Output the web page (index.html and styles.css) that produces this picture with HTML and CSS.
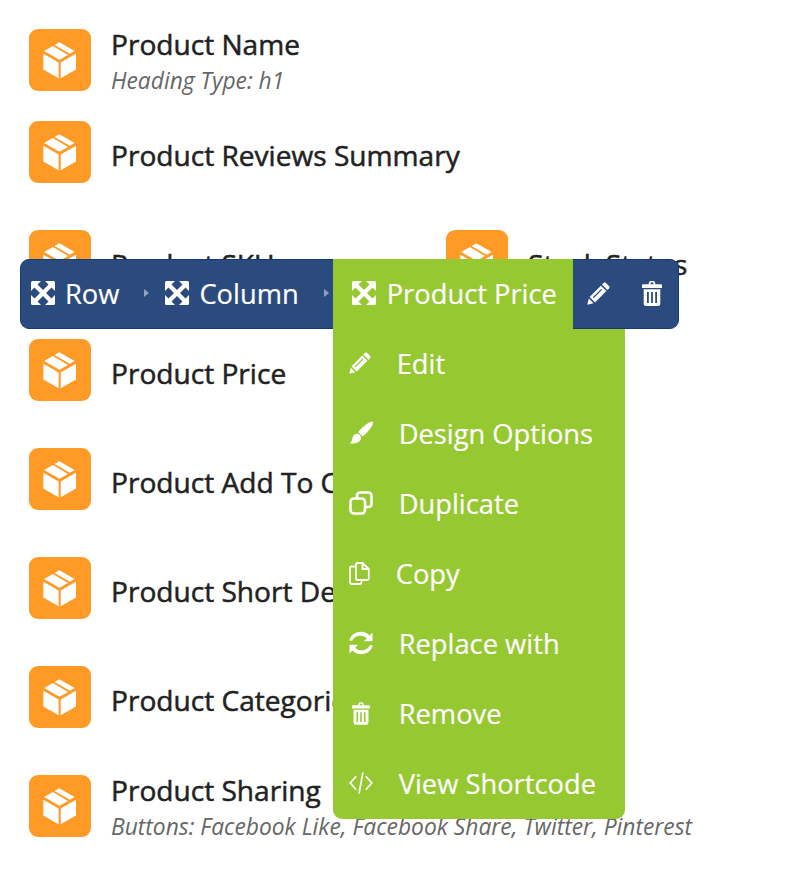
FILE: index.html
```html
<!DOCTYPE html>
<html lang="en">
<head>
<meta charset="utf-8">
<title>Product elements</title>
<link rel="stylesheet" href="styles.css">
</head>
<body>
<svg class="defs" width="0" height="0" aria-hidden="true">
  <defs>
    <symbol id="box" viewBox="0 0 62 62">
      <path d="M30.3 13.2 45.7 22 40.800 24.800 25.600 16Z"/>
      <path d="M23.800 17 39 25.900 30.500 30.800 15.200 22Z"/>
      <path d="M14.300 24.800 29.600 33.600V49.300L14.300 40.500Z"/>
      <path d="M47 24.800 31.700 33.600V49.300L47 40.500Z"/>
    </symbol>
    <symbol id="move" viewBox="0 0 24 24">
      <path d="M1.500 0H10L0 10V1.500Q0 0 1.500 0Z"/>
      <path d="M22.500 0H14L24 10V1.500Q24 0 22.500 0Z"/>
      <path d="M1.500 24H10L0 14V22.500Q0 24 1.500 24Z"/>
      <path d="M22.500 24H14L24 14V22.500Q24 24 22.500 24Z"/>
      <path d="M3 6 6 3 12 9 18 3 21 6 15 12 21 18 18 21 12 15 6 21 3 18 9 12Z"/>
    </symbol>
    <symbol id="pencil" viewBox="0 0 24 24">
      <path d="M17.400 .9Q18.500 0 19.600 .9L23.100 4.400Q24 5.500 23.100 6.600L21.300 8.400 15.600 2.700Z"/>
      <path fill-rule="evenodd" d="M14.500 3.800 20.200 9.500 8.400 21.300 2.700 15.600ZM14.800 7.200 6 16 6.900 16.900 15.700 8.100Z"/>
      <path d="M1.900 17.200 6.800 22.100 .3 23.700Z"/>
    </symbol>
    <symbol id="brush" viewBox="0 0 24 24">
      <path d="M23.600 .6C24.500 2 23.800 4 22 6.500 19.500 10 16 14 13.500 15.400L9.200 11.200C11 8.500 15 4.800 18.500 2.400 20.800 .8 22.800 0 23.600 .6Z"/>
      <path d="M7.800 12.800C10.200 12.800 12.400 15 11.900 17.500 11.300 21.300 6.800 23 .4 22.400 2.800 20.800 2.900 19.400 3.400 17 3.900 14.400 5.600 12.800 7.800 12.800Z"/>
    </symbol>
    <symbol id="duplicate" viewBox="0 0 24 24">
      <path fill="none" stroke="currentColor" stroke-width="2.600" d="M8 7.500V4.800Q8 1.500 11.300 1.500H19.200Q22.500 1.500 22.500 4.800V12.700Q22.500 16 19.200 16H16.500"/>
      <rect x="1.500" y="7.500" width="14.500" height="15" rx="3.500" fill="none" stroke="currentColor" stroke-width="2.600"/>
    </symbol>
    <symbol id="copy" viewBox="0 0 21 23">
      <path fill="none" stroke="currentColor" stroke-width="1.800" stroke-linejoin="round" d="M7 4.500H2.500Q1 4.500 1 6V20.500Q1 22 2.500 22H11Q12.500 22 12.500 20.500V18"/>
      <path fill="none" stroke="currentColor" stroke-width="1.800" stroke-linejoin="round" d="M13.500 1H8.500Q7 1 7 2.500V16.500Q7 18 8.500 18H18.200Q19.800 18 19.800 16.500V7ZM13.500 1V7H19.800"/>
    </symbol>
    <symbol id="refresh" viewBox="0 0 24 24">
      <path d="M3.300 9.800H.3C1.400 4.400 6 .8 11.900 .8 15.400 .8 18.500 2.200 20.600 4.500L23.500 1.600V10.300H14.800L17.800 7.300C16.300 5.700 14.300 4.700 11.900 4.700 7.900 4.700 4.500 6.600 3.300 9.800Z"/>
      <path d="M20.700 14.200H23.700C22.600 19.600 18 23.200 12.100 23.200 8.600 23.200 5.500 21.800 3.400 19.500L.5 22.400V13.700H9.200L6.200 16.700C7.700 18.300 9.700 19.300 12.100 19.300 16.100 19.300 19.500 17.400 20.700 14.200Z"/>
    </symbol>
    <symbol id="trash" viewBox="0 0 20 25">
      <path d="M6.500 3.200 7.500 .6Q7.800 0 8.500 0H11.500Q12.200 0 12.500 .6L13.500 3.200H18.800Q20 3.200 20 4.400V7H0V4.400Q0 3.200 1.200 3.200ZM8.300 3.200H11.700L11.100 1.600H8.900Z"/>
      <path fill-rule="evenodd" d="M1.700 8.300H18.300V22.500Q18.300 25 15.800 25H4.200Q1.700 25 1.700 22.500ZM5 11V22H6.800V11ZM9.100 11V22H10.900V11ZM13.200 11V22H15V11Z"/>
    </symbol>
    <symbol id="code" viewBox="0 0 25 24">
      <path fill="none" stroke="currentColor" stroke-width="1.800" d="M7.500 5 1.300 12 7.500 19M17.500 5 23.700 12 17.500 19M14.500 1 10.500 23"/>
    </symbol>
  </defs>
</svg>

<main class="list">
  <div class="row row-first">
    <div class="item">
      <span class="tile"><svg class="box"><use href="#box"/></svg></span>
      <div class="info info-sub">
        <div class="title">Product Name</div>
        <div class="sub">Heading Type: h1</div>
      </div>
    </div>
  </div>
  <div class="row">
    <div class="item item-wide">
      <span class="tile"><svg class="box"><use href="#box"/></svg></span>
      <div class="info"><div class="title">Product Reviews Summary</div></div>
    </div>
  </div>
  <div class="row">
    <div class="item">
      <span class="tile"><svg class="box"><use href="#box"/></svg></span>
      <div class="info"><div class="title">Product SKU</div></div>
    </div>
    <div class="item item-right">
      <span class="tile"><svg class="box"><use href="#box"/></svg></span>
      <div class="info"><div class="title">Stock Status</div></div>
    </div>
  </div>
  <div class="row">
    <div class="item">
      <span class="tile"><svg class="box"><use href="#box"/></svg></span>
      <div class="info"><div class="title">Product Price</div></div>
    </div>
  </div>
  <div class="row">
    <div class="item">
      <span class="tile"><svg class="box"><use href="#box"/></svg></span>
      <div class="info"><div class="title">Product Add To Cart</div></div>
    </div>
  </div>
  <div class="row">
    <div class="item">
      <span class="tile"><svg class="box"><use href="#box"/></svg></span>
      <div class="info"><div class="title">Product Short Description</div></div>
    </div>
  </div>
  <div class="row">
    <div class="item">
      <span class="tile"><svg class="box"><use href="#box"/></svg></span>
      <div class="info"><div class="title">Product Categories</div></div>
    </div>
  </div>
  <div class="row row-last">
    <div class="item item-wide">
      <span class="tile"><svg class="box"><use href="#box"/></svg></span>
      <div class="info info-sub">
        <div class="title">Product Sharing</div>
        <div class="sub">Buttons: Facebook Like, Facebook Share, Twitter, Pinterest</div>
      </div>
    </div>
  </div>
</main>

<nav class="toolbar">
  <div class="crumb crumb-row">
    <svg class="move"><use href="#move"/></svg><span>Row</span>
  </div>
  <span class="caret caret-row"></span>
  <div class="crumb crumb-col">
    <svg class="move"><use href="#move"/></svg><span>Column</span>
  </div>
  <span class="caret caret-col"></span>
  <div class="tab">
    <svg class="move"><use href="#move"/></svg><span>Product Price</span>
    <ul class="menu">
      <li class="menu-item"><svg class="mi mi-pencil"><use href="#pencil"/></svg><span>Edit</span></li>
      <li class="menu-item"><svg class="mi mi-brush"><use href="#brush"/></svg><span>Design Options</span></li>
      <li class="menu-item"><svg class="mi mi-dup"><use href="#duplicate"/></svg><span>Duplicate</span></li>
      <li class="menu-item"><svg class="mi mi-copy"><use href="#copy"/></svg><span>Copy</span></li>
      <li class="menu-item"><svg class="mi mi-refresh"><use href="#refresh"/></svg><span>Replace with</span></li>
      <li class="menu-item"><svg class="mi mi-trash"><use href="#trash"/></svg><span>Remove</span></li>
      <li class="menu-item"><svg class="mi mi-code"><use href="#code"/></svg><span>View Shortcode</span></li>
    </ul>
  </div>
  <div class="actions">
    <svg class="act-pencil"><use href="#pencil"/></svg>
    <svg class="act-trash"><use href="#trash"/></svg>
  </div>
</nav>
</body>
</html>
```
FILE: styles.css
```css
* { box-sizing: border-box; }
html, body { margin: 0; height: 878px; overflow: hidden; background: #fff; }
body {
  position: relative;
  font-family: "Open Sans", "Noto Sans", sans-serif;
  color: #222;
}
.defs { position: absolute; }

.list { padding: 29px 0 0 29px; }
.row { display: flex; height: 62px; margin-bottom: 47px; }
.row-first { margin-bottom: 30px; }
.row-last { margin-bottom: 0; }
.item { display: flex; width: 417px; gap: 20px; flex: none; }
.item-wide { width: 700px; }
.item-right { width: 354px; }

.tile {
  flex: none;
  width: 62px;
  height: 62px;
  border-radius: 9px;
  background: #ff9a26;
  color: #fff;
}
.box { display: block; width: 62px; height: 62px; fill: #fff; }

.info { padding-top: 16px; white-space: nowrap; }
.info-sub { padding-top: 0; }
.title { font-size: 28.1px; font-weight: 400; line-height: 36px; -webkit-text-stroke: .5px currentColor; }
.info-sub .title { line-height: 30px; }
.sub { font-size: 22.8px; font-style: italic; line-height: 44px; color: #666; }

.toolbar {
  position: absolute;
  left: 20px;
  top: 259px;
  width: 659px;
  height: 70px;
  display: flex;
  align-items: stretch;
  color: #fff;
  font-size: 27.3px;
  font-weight: 400;
  -webkit-text-stroke: .2px currentColor;
  background: #2b4b7e;
  border: 1px solid #143c78;
  border-radius: 9px;
}
.crumb { display: flex; align-items: center; gap: 10px; flex: none; height: 66px; }
.crumb-row { margin-left: 10px; }
.move { display: block; flex: none; width: 24px; height: 24px; fill: #fff; }
.caret {
  align-self: center;
  flex: none;
  width: 0;
  height: 0;
  margin-top: -2px;
  border-left: 5px solid #8fa3c0;
  border-top: 4.500px solid transparent;
  border-bottom: 4.500px solid transparent;
}
.caret-row { margin-left: 25px; margin-right: 16px; }
.caret-col { margin-left: 25px; margin-right: 4px; }

.tab {
  position: relative;
  flex: none;
  display: flex;
  align-items: center;
  gap: 11px;
  width: 240px;
  height: 70px;
  margin: -1px 0;
  padding: 0 0 2px 19px;
  background: #96c832;
}
.menu {
  position: absolute;
  left: 0;
  top: 70px;
  width: 292px;
  margin: 0;
  padding: 0;
  list-style: none;
  background: #96c832;
  border-radius: 0 0 9px 9px;
}
.menu-item {
  display: flex;
  align-items: center;
  gap: 26px;
  height: 70px;
  padding: 0 0 2px 16px;
}
.mi { display: block; flex: none; fill: #fff; color: #fff; }
.mi-pencil { width: 22px; height: 22px; }
.mi-brush { width: 24px; height: 24px; }
.mi-dup { width: 24px; height: 24px; }
.mi-copy { width: 21px; height: 23px; }
.mi-refresh { width: 24px; height: 24px; }
.mi-trash { width: 18px; height: 23px; margin: 0 3px; }
.mi-code { width: 24px; height: 24px; }

.actions { display: flex; align-items: center; gap: 32px; padding: 0 0 2px 14px; }
.act-pencil { display: block; width: 23px; height: 23px; fill: #fff; }
.act-trash { display: block; width: 20px; height: 25px; fill: #fff; }
```
